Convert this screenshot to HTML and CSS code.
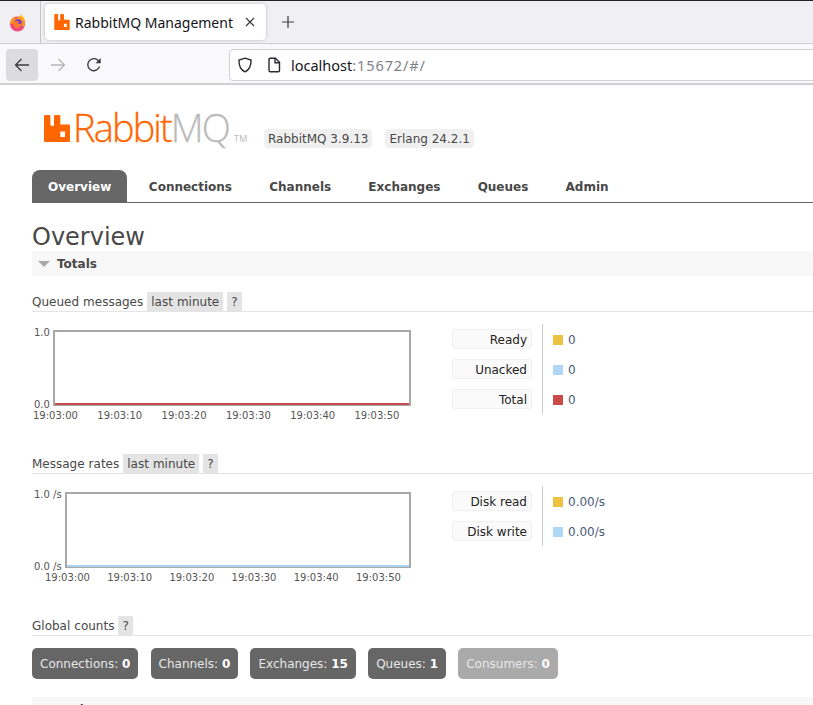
FILE: index.html
```html
<!DOCTYPE html>
<html lang="en">

<head>
    <meta charset="UTF-8">
    <title>RabbitMQ Management</title>
    <link rel="stylesheet" href="styles.css">
</head>

<body>
    <!-- browser chrome -->
    <div class="tabbar">
        <div class="ff-slot">
            <svg width="18" height="18" viewBox="0 0 18 18">
                <circle cx="8.500" cy="10" r="7.500" fill="#f2487a"/>
                <path d="M1 9.500C1.200 5.500 3.800 3 6.500 2.500 5.800 3.500 5.600 4.300 5.800 5 7.500 3.800 10.500 3.700 11.800 .8 14.800 2.500 16.200 5.800 16 9c0 1.500-.4 2.700-1 3.800C12 10.500 5 10.500 1 9.500z" fill="#ff9526"/>
                <path d="M11.500 .5c2 .9 4 3 5 6.500-1.200-1.800-2.800-3.100-4.600-3.600z" fill="#ffcf30"/>
                <circle cx="9" cy="9.500" r="4.200" fill="#6f3ac6"/>
                <path d="M4.200 8.500c1.800-1.900 4.800-1.900 6.400-.5-1 .2-1.700.6-2 1.200 1.400 1.100 3 .7 4.500-.2-.1 2.800-2.300 5-4.800 4.900-2.700-.1-4.500-2.400-4.100-5.400z" fill="#ff7a2a"/>
            </svg>
        </div>
        <div class="tab">
            <svg class="tab-logo" width="16" height="16" viewBox="0 0 26 27">
                <path class="logo-mark" fill-rule="evenodd" d="M0 1.200Q0 0 1.200 0H5.200Q6.400 0 6.400 1.200V9.300Q6.400 11 8 11H9Q10 11 10 9.500V1.200Q10 0 11.200 0H15Q16.300 0 16.300 1.200V9.500H25Q26 9.500 26 10.500V26Q26 27 25 27H1Q0 27 0 26ZM16.300 16.500V22H21V16.500Z"/>
            </svg>
            <span class="tab-title">RabbitMQ Management</span>
            <svg class="tab-close" width="12" height="12" viewBox="0 0 12 12">
                <path d="M2 2l8 8M10 2l-8 8"/>
            </svg>
        </div>
        <svg class="new-tab" width="14" height="14" viewBox="0 0 14 14">
            <path d="M7 1v12M1 7h12"/>
        </svg>
    </div>
    <div class="navbar">
        <div class="nav-btn nav-btn-on">
            <svg width="16" height="16" viewBox="0 0 16 16"><path d="M15 8H1.500M7.500 2L1.500 8l6 6"/></svg>
        </div>
        <div class="nav-btn nav-btn-off">
            <svg width="16" height="16" viewBox="0 0 16 16"><path d="M1 8h13.500M8.500 2l6 6-6 6"/></svg>
        </div>
        <div class="nav-btn">
            <svg width="16" height="16" viewBox="0 0 16 16"><path d="M13.500 9.500A6 6 0 1 1 11.500 3l2.500 2"/><path class="reload-head" d="M14.700 1v5.200H9.500z"/></svg>
        </div>
        <div class="urlbar">
            <svg class="url-shield" width="16" height="16" viewBox="0 0 16 16"><path d="M8 1.200l6 1.800c.2 5.500-1.500 9.800-6 11.800C3.500 12.800 1.800 8.500 2 3z"/></svg>
            <svg class="url-page" width="14" height="16" viewBox="0 0 14 16"><path d="M2 2.500Q2 1.200 3.300 1.200H8.500L12.500 5.200V13.500Q12.500 14.800 11.200 14.800H3.300Q2 14.800 2 13.500Z"/><path class="page-fold" d="M8 1.200V5.700H12.500"/></svg>
            <span class="url-host">localhost</span><span class="url-rest">:15672/#/</span>
        </div>
    </div>

    <!-- rabbitmq page -->
    <div class="page">
        <div class="header">
            <div class="logo">
                <svg class="logo-svg" width="26" height="27" viewBox="0 0 26 27">
                    <path class="logo-mark" fill-rule="evenodd" d="M0 1.200Q0 0 1.200 0H5.200Q6.400 0 6.400 1.200V9.300Q6.400 11 8 11H9Q10 11 10 9.500V1.200Q10 0 11.200 0H15Q16.300 0 16.300 1.200V9.500H25Q26 9.500 26 10.500V26Q26 27 25 27H1Q0 27 0 26ZM16.300 16.500V22H21V16.500Z"/>
                </svg>
                <span class="logo-rabbit">Rabbit</span><span class="logo-mq">MQ</span><span class="logo-tm">TM</span>
            </div>
            <span class="version">RabbitMQ 3.9.13</span>
            <span class="version">Erlang 24.2.1</span>
        </div>

        <ul class="tabs">
            <li class="active">Overview</li>
            <li>Connections</li>
            <li>Channels</li>
            <li>Exchanges</li>
            <li>Queues</li>
            <li>Admin</li>
        </ul>

        <h1>Overview</h1>

        <div class="section-bar"><span class="triangle"></span>Totals</div>

        <h3 class="sub first">Queued messages <span class="pill">last minute</span> <span class="pill">?</span></h3>
        <div class="chart-row">
            <div class="chart chart-queued">
                <div class="y-labels"><span>1.0</span><span>0.0</span></div>
                <div class="plot"><div class="plot-line line-red"></div></div>
                <div class="x-labels">
                    <span>19:03:00</span><span>19:03:10</span><span>19:03:20</span>
                    <span>19:03:30</span><span>19:03:40</span><span>19:03:50</span>
                </div>
            </div>
            <div class="legend legend-queued">
                <div class="legend-names">
                    <div class="name">Ready</div>
                    <div class="name">Unacked</div>
                    <div class="name">Total</div>
                </div>
                <div class="legend-vals">
                    <div class="val"><span class="swatch sw-yellow"></span>0</div>
                    <div class="val"><span class="swatch sw-blue"></span>0</div>
                    <div class="val"><span class="swatch sw-red"></span>0</div>
                </div>
            </div>
        </div>

        <h3 class="sub second">Message rates <span class="pill">last minute</span> <span class="pill">?</span></h3>
        <div class="chart-row">
            <div class="chart chart-rates">
                <div class="y-labels"><span>1.0 /s</span><span>0.0 /s</span></div>
                <div class="plot"><div class="plot-line line-blue"></div></div>
                <div class="x-labels">
                    <span>19:03:00</span><span>19:03:10</span><span>19:03:20</span>
                    <span>19:03:30</span><span>19:03:40</span><span>19:03:50</span>
                </div>
            </div>
            <div class="legend legend-rates">
                <div class="legend-names">
                    <div class="name">Disk read</div>
                    <div class="name">Disk write</div>
                </div>
                <div class="legend-vals">
                    <div class="val"><span class="swatch sw-yellow"></span>0.00/s</div>
                    <div class="val"><span class="swatch sw-blue"></span>0.00/s</div>
                </div>
            </div>
        </div>

        <h3 class="sub third">Global counts <span class="pill">?</span></h3>
        <div class="counts">
            <div class="count">Connections: <b>0</b></div>
            <div class="count">Channels: <b>0</b></div>
            <div class="count">Exchanges: <b>15</b></div>
            <div class="count">Queues: <b>1</b></div>
            <div class="count count-dim">Consumers: <b>0</b></div>
        </div>

        <div class="section-bar section-nodes"><span class="triangle"></span>Nodes</div>
    </div>
</body>

</html>
```

FILE: styles.css
```css
html,
body {
    margin: 0;
    padding: 0;
    height: 705px;
    overflow: hidden;
    background-color: white;
}

body {
    font-family: "DejaVu Sans", sans-serif;
    font-size: 12px;
    color: #484848;
}

/* browser chrome */
.tabbar {
    height: 44px;
    box-sizing: border-box;
    border-top: 1px solid #222;
    border-bottom: 1px solid #cfcfd2;
    background-color: #f0f0f4;
    display: flex;
    align-items: center;
}

.ff-slot {
    width: 41px;
    height: 42px;
    box-sizing: border-box;
    border-right: 1px solid #c4c4c8;
    display: flex;
    justify-content: center;
    align-items: center;
    padding: 1px 4px 0 0;
}

.tab {
    width: 221px;
    height: 36px;
    margin-left: 4px;
    box-sizing: border-box;
    padding-left: 9px;
    background-color: white;
    border-radius: 4px;
    box-shadow: 0 0 3px rgba(0, 0, 0, 0.25);
    display: flex;
    align-items: center;
    font-family: "Noto Sans", sans-serif;
    font-size: 14px;
    color: #15141a;
}

.tab-logo {
    flex: none;
}

.tab-title {
    margin-left: 5px;
    white-space: nowrap;
}

.tab-close {
    margin-left: 11px;
    flex: none;
}

.tab-close path,
.new-tab path {
    stroke: #3a3a40;
    stroke-width: 1.2;
    fill: none;
}

.new-tab {
    margin-left: 15px;
}

.navbar {
    height: 41px;
    box-sizing: border-box;
    background-color: #f9f9fb;
    border-bottom: 2px solid #cfcfd2;
    display: flex;
    align-items: center;
    padding: 2px 0 0 6px;
}

.nav-btn {
    width: 32px;
    height: 32px;
    margin-right: 4px;
    border-radius: 4px;
    display: flex;
    justify-content: center;
    align-items: center;
}

.nav-btn svg path {
    fill: none;
    stroke: #3a3a40;
    stroke-width: 1.3;
}

.nav-btn svg .reload-head {
    fill: #3a3a40;
    stroke: none;
}

.nav-btn-on {
    background-color: #dcdcdf;
}

.nav-btn-off svg path {
    stroke: #b4b4b8;
}

.urlbar {
    margin-left: 115px;
    flex: 1;
    height: 32px;
    margin-right: -20px;
    box-sizing: border-box;
    background-color: white;
    border: 1px solid #cfcfd4;
    border-radius: 4px;
    display: flex;
    align-items: center;
    padding-left: 7px;
    font-family: "Noto Sans", sans-serif;
    font-size: 14.500px;
}

.url-shield path,
.url-page path {
    fill: none;
    stroke: #2a2a30;
    stroke-width: 1.4;
}

.url-page {
    margin-left: 14px;
}

.url-host {
    margin-left: 10px;
    color: #15141a;
}

.url-rest {
    color: #7f7f85;
    letter-spacing: 0.900px;
}

/* rabbitmq page */
.page {
    padding-left: 32px;
    width: 900px;
}

.header {
    height: 85px;
    box-sizing: border-box;
    padding-top: 28px;
    display: flex;
    align-items: flex-start;
}

.logo {
    margin-left: 12px;
    width: 220px;
    height: 36px;
    display: flex;
    align-items: flex-start;
    font-family: "Open Sans", sans-serif;
    font-weight: 300;
    font-size: 38px;
    line-height: 29px;
    letter-spacing: -1.900px;
    -webkit-text-stroke: 0.3px;
}

.logo-svg {
    flex: none;
    margin-top: 2px;
    margin-right: 3px;
}

.logo-mark {
    fill: #f60;
}

.logo-rabbit {
    color: #f60;
}

.logo-mq {
    color: #bbb;
}

.logo-tm {
    font-size: 9px;
    font-weight: 400;
    letter-spacing: 0.500px;
    line-height: 12px;
    color: #bbb;
    margin-left: 5px;
    margin-top: 20px;
    -webkit-text-stroke: 0;
}

.version {
    margin-top: 16px;
    margin-right: 13px;
    padding: 0 4px;
    height: 19px;
    line-height: 21px;
    border-radius: 4px;
    background-color: #f0f0f0;
    white-space: nowrap;
}

.tabs {
    list-style: none;
    margin: 0;
    padding: 0;
    height: 33px;
    box-sizing: border-box;
    border-bottom: 1px solid #666;
    display: flex;
}

.tabs li {
    padding: 0 18.600px;
    line-height: 35px;
    height: 32px;
    font-weight: bold;
    color: #484848;
}

.tabs li.active {
    background-color: #666;
    color: white;
    padding: 0 16px;
    border-radius: 8px 8px 0 0;
    margin-right: 3px;
}

h1 {
    margin: 19px 0 0 0;
    font-size: 24px;
    font-weight: normal;
    line-height: 30px;
    height: 29px;
}

.section-bar {
    height: 25px;
    box-sizing: border-box;
    padding-top: 2px;
    line-height: 23px;
    background-color: #f8f8f8;
    font-weight: bold;
    display: flex;
    align-items: center;
}

.triangle {
    width: 0;
    height: 0;
    margin: -2px 7px 0 6px;
    border-left: 6px solid transparent;
    border-right: 6px solid transparent;
    border-top: 6px solid #aaa;
}

.sub {
    margin: 0;
    font-size: 12px;
    font-weight: normal;
    height: 20px;
    line-height: 21px;
    box-sizing: border-box;
    border-bottom: 1px solid #e4e4e4;
    word-spacing: 0.200px;
}

.sub.first {
    margin-top: 16px;
}

.sub.second {
    margin-top: 34px;
}

.sub.third {
    margin-top: 34px;
}

.pill {
    display: inline-block;
    height: 19px;
    padding: 0 4px;
    background-color: #e4e4e4;
}

.chart-row {
    display: flex;
}

.chart {
    width: 380px;
    display: grid;
    font-size: 10px;
    color: #545454;
    margin-top: 18px;
    grid-template-rows: 76px 14px;
}

.chart-queued {
    grid-template-columns: 21px 358px;
}

.chart-rates {
    grid-template-columns: 33px 346px;
}

.y-labels {
    display: flex;
    flex-direction: column;
    justify-content: space-between;
    line-height: 13px;
    padding-left: 2px;
    margin-top: -4px;
    margin-bottom: -5px;
    white-space: nowrap;
}

.plot {
    box-sizing: border-box;
    border: 2px solid #a8a8a8;
    border-bottom-width: 1px;
    display: flex;
    align-items: flex-end;
}

.plot-line {
    width: 100%;
    height: 2px;
}

.line-red {
    background-color: #c94a4a;
}

.line-blue {
    background-color: #a8d2f2;
}

.x-labels {
    grid-column: 1 / 3;
    display: flex;
    line-height: 14px;
    margin-top: 3px;
}

.x-labels span {
    width: 64.300px;
    flex: none;
    white-space: nowrap;
}

.chart-queued .x-labels {
    padding-left: 1px;
}

.chart-rates .x-labels {
    padding-left: 13px;
}

.chart-rates .x-labels span {
    width: 62.200px;
}

.legend {
    display: flex;
    margin-left: 40px;
    margin-top: 12px;
    height: 90px;
}

.legend-rates {
    height: 60px;
}

.legend-names {
    width: 80px;
    padding-top: 5px;
    padding-right: 10px;
    border-right: 1px solid #ccc;
}

.name {
    height: 20px;
    line-height: 21px;
    margin-bottom: 10px;
    box-sizing: border-box;
    border: 1px solid #f0f0f0;
    border-radius: 3px;
    background-color: #fafafa;
    text-align: right;
    padding-right: 4px;
    color: #222;
}

.legend-vals {
    padding-top: 6px;
    padding-left: 10px;
    color: #4a5a78;
}

.val {
    height: 20px;
    line-height: 20px;
    margin-bottom: 10px;
    display: flex;
    align-items: center;
}

.swatch {
    width: 10px;
    height: 10px;
    margin-right: 5px;
}

.sw-yellow {
    background-color: #edc240;
}

.sw-blue {
    background-color: #afd8f8;
}

.sw-red {
    background-color: #cb4b4b;
}

.counts {
    display: flex;
    gap: 12.200px;
    margin-top: 12px;
}

.count {
    height: 31px;
    line-height: 33px;
    padding: 0 8px;
    border-radius: 5px;
    background-color: #666;
    color: #e8e8e8;
    white-space: nowrap;
}

.count b {
    color: white;
}

.count-dim {
    background-color: #aaa;
}

.section-nodes {
    margin-top: 18px;
}
```
